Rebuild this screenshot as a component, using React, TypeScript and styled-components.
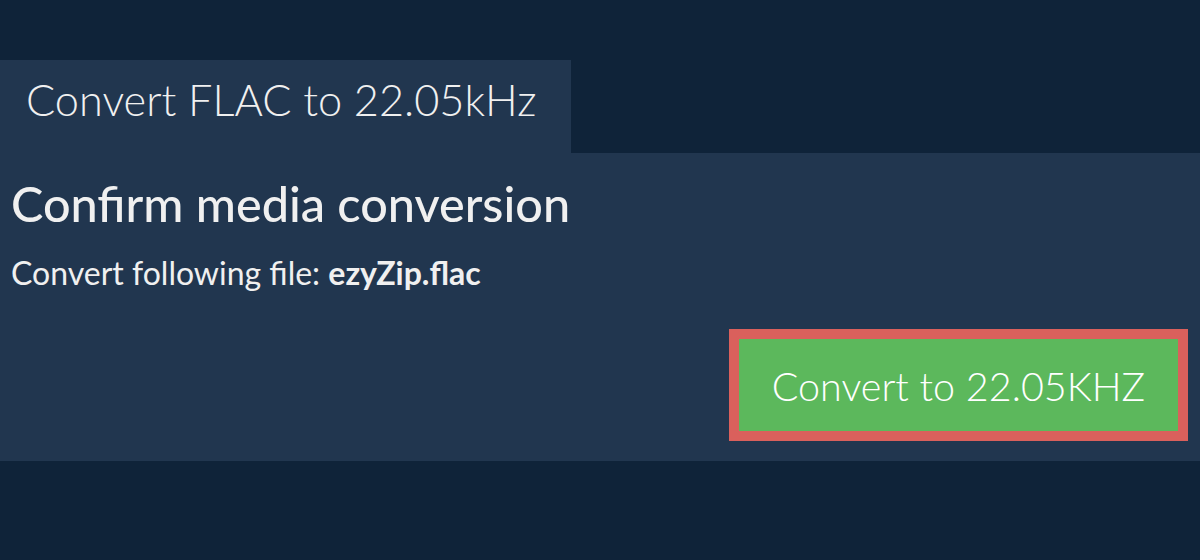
import React from 'react';
import styled, { createGlobalStyle } from 'styled-components';

const GlobalStyle = createGlobalStyle`
  html, body {
    margin: 0;
    padding: 0;
    background: #0f2339;
    font-family: Lato, "Open Sans", sans-serif;
  }
`;

const Page = styled.div`
  padding-top: 60px;
`;

const Tab = styled.div`
  display: inline-block;
  box-sizing: border-box;
  background: #21364f;
  color: #f0f0f0;
  font-weight: 300;
  font-size: 43.3px;
  line-height: 53px;
  height: 93px;
  padding: 13px 35px 27px 26px;
`;

const Panel = styled.div`
  background: #21364f;
  color: #f0f0f0;
  padding: 20px 12px 20px 11px;
  height: 308px;
  box-sizing: border-box;
  display: flex;
  flex-direction: column;
`;

const Title = styled.h2`
  margin: 0;
  font-size: 48.6px;
  font-weight: 500;
  line-height: 60px;
`;

const Info = styled.p`
  margin: 21px 0 0;
  font-size: 32px;
  line-height: 38px;
`;

const Actions = styled.div`
  display: flex;
  justify-content: flex-end;
  margin-top: auto;
`;

const ConvertButton = styled.button`
  background: #5cb85c;
  border: 10px solid #da605c;
  color: #fff;
  font-family: Lato, "Open Sans", sans-serif;
  font-weight: 300;
  font-size: 39.5px;
  width: 459px;
  height: 112px;
  padding: 0;
  cursor: pointer;
`;

export default function App() {
  return (
    <Page>
      <GlobalStyle />
      <Tab>Convert FLAC to 22.05kHz</Tab>
      <Panel>
        <Title>Confirm media conversion</Title>
        <Info>
          Convert following file: <b>ezyZip.flac</b>
        </Info>
        <Actions>
          <ConvertButton>Convert to 22.05KHZ</ConvertButton>
        </Actions>
      </Panel>
    </Page>
  );
}
